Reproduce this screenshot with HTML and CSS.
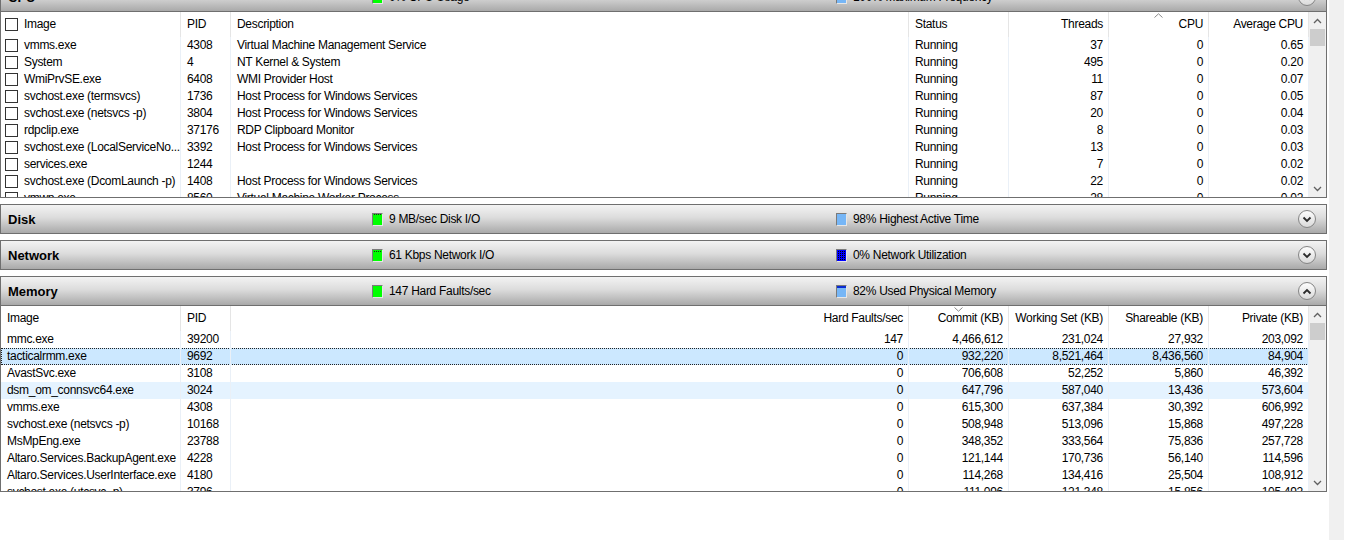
FILE: index.html
```html
<!DOCTYPE html>
<html lang="en">
<head>
    <meta charset="UTF-8">
    <title>Resource Monitor - Overview</title>
    <link rel="stylesheet" href="styles.css">
</head>
<body>
<div class="window">
    <div class="overview">

        <!-- CPU -->
        <section class="panel panel-first">
            <div class="panel-head">
                <span class="panel-title">CPU</span>
                <span class="stat stat-a"><i class="meter meter-green"></i>0% CPU Usage</span>
                <span class="stat stat-b"><i class="meter meter-light"></i>100% Maximum Frequency</span>
                <span class="toggle-btn"><svg width="10" height="7" viewBox="0 0 10 7"><path d="M1.5 5.5 L5 2 L8.5 5.5" /></svg></span>
            </div>
            <div class="grid-wrap">
                <div class="grid">
                    <div class="row row-head">
                        <div class="cell"><span class="chk"></span>Image</div>
                        <div class="cell">PID</div>
                        <div class="cell">Description</div>
                        <div class="cell">Status</div>
                        <div class="cell num">Threads</div>
                        <div class="cell num sorted">CPU<svg class="sort-mark" width="9" height="5" viewBox="0 0 9 5"><path d="M0.5 4.5 L4.5 0.8 L8.5 4.5" /></svg></div>
                        <div class="cell num">Average CPU</div>
                    </div>
                    <div class="row">
                        <div class="cell"><span class="chk"></span>vmms.exe</div>
                        <div class="cell">4308</div>
                        <div class="cell">Virtual Machine Management Service</div>
                        <div class="cell">Running</div>
                        <div class="cell num">37</div>
                        <div class="cell num">0</div>
                        <div class="cell num">0.65</div>
                    </div>
                    <div class="row">
                        <div class="cell"><span class="chk"></span>System</div>
                        <div class="cell">4</div>
                        <div class="cell">NT Kernel &amp; System</div>
                        <div class="cell">Running</div>
                        <div class="cell num">495</div>
                        <div class="cell num">0</div>
                        <div class="cell num">0.20</div>
                    </div>
                    <div class="row">
                        <div class="cell"><span class="chk"></span>WmiPrvSE.exe</div>
                        <div class="cell">6408</div>
                        <div class="cell">WMI Provider Host</div>
                        <div class="cell">Running</div>
                        <div class="cell num">11</div>
                        <div class="cell num">0</div>
                        <div class="cell num">0.07</div>
                    </div>
                    <div class="row">
                        <div class="cell"><span class="chk"></span>svchost.exe (termsvcs)</div>
                        <div class="cell">1736</div>
                        <div class="cell">Host Process for Windows Services</div>
                        <div class="cell">Running</div>
                        <div class="cell num">87</div>
                        <div class="cell num">0</div>
                        <div class="cell num">0.05</div>
                    </div>
                    <div class="row">
                        <div class="cell"><span class="chk"></span>svchost.exe (netsvcs -p)</div>
                        <div class="cell">3804</div>
                        <div class="cell">Host Process for Windows Services</div>
                        <div class="cell">Running</div>
                        <div class="cell num">20</div>
                        <div class="cell num">0</div>
                        <div class="cell num">0.04</div>
                    </div>
                    <div class="row">
                        <div class="cell"><span class="chk"></span>rdpclip.exe</div>
                        <div class="cell">37176</div>
                        <div class="cell">RDP Clipboard Monitor</div>
                        <div class="cell">Running</div>
                        <div class="cell num">8</div>
                        <div class="cell num">0</div>
                        <div class="cell num">0.03</div>
                    </div>
                    <div class="row">
                        <div class="cell"><span class="chk"></span>svchost.exe (LocalServiceNo...</div>
                        <div class="cell">3392</div>
                        <div class="cell">Host Process for Windows Services</div>
                        <div class="cell">Running</div>
                        <div class="cell num">13</div>
                        <div class="cell num">0</div>
                        <div class="cell num">0.03</div>
                    </div>
                    <div class="row">
                        <div class="cell"><span class="chk"></span>services.exe</div>
                        <div class="cell">1244</div>
                        <div class="cell"></div>
                        <div class="cell">Running</div>
                        <div class="cell num">7</div>
                        <div class="cell num">0</div>
                        <div class="cell num">0.02</div>
                    </div>
                    <div class="row">
                        <div class="cell"><span class="chk"></span>svchost.exe (DcomLaunch -p)</div>
                        <div class="cell">1408</div>
                        <div class="cell">Host Process for Windows Services</div>
                        <div class="cell">Running</div>
                        <div class="cell num">22</div>
                        <div class="cell num">0</div>
                        <div class="cell num">0.02</div>
                    </div>
                    <div class="row">
                        <div class="cell"><span class="chk"></span>vmwp.exe</div>
                        <div class="cell">8560</div>
                        <div class="cell">Virtual Machine Worker Process</div>
                        <div class="cell">Running</div>
                        <div class="cell num">28</div>
                        <div class="cell num">0</div>
                        <div class="cell num">0.02</div>
                    </div>
                </div>
                <div class="vscroll">
                    <span class="sb-arrow"><svg width="9" height="6" viewBox="0 0 9 6"><path d="M1 5 L4.5 1.5 L8 5" /></svg></span>
                    <span class="sb-thumb"></span>
                    <span class="sb-track"></span>
                    <span class="sb-arrow"><svg width="9" height="6" viewBox="0 0 9 6"><path d="M1 1 L4.5 4.5 L8 1" /></svg></span>
                </div>
            </div>
        </section>

        <!-- Disk -->
        <section class="panel">
            <div class="panel-head closed">
                <span class="panel-title">Disk</span>
                <span class="stat stat-a"><i class="meter meter-green level-1"></i>9 MB/sec Disk I/O</span>
                <span class="stat stat-b"><i class="meter meter-light"></i>98% Highest Active Time</span>
                <span class="toggle-btn"><svg width="10" height="7" viewBox="0 0 10 7"><path d="M1.5 1.5 L5 5 L8.5 1.5" /></svg></span>
            </div>
        </section>

        <!-- Network -->
        <section class="panel">
            <div class="panel-head closed">
                <span class="panel-title">Network</span>
                <span class="stat stat-a"><i class="meter meter-green level-2"></i>61 Kbps Network I/O</span>
                <span class="stat stat-b"><i class="meter meter-blue"></i>0% Network Utilization</span>
                <span class="toggle-btn"><svg width="10" height="7" viewBox="0 0 10 7"><path d="M1.5 1.5 L5 5 L8.5 1.5" /></svg></span>
            </div>
        </section>

        <!-- Memory -->
        <section class="panel">
            <div class="panel-head">
                <span class="panel-title">Memory</span>
                <span class="stat stat-a"><i class="meter meter-green"></i>147 Hard Faults/sec</span>
                <span class="stat stat-b"><i class="meter meter-light level-mem"></i>82% Used Physical Memory</span>
                <span class="toggle-btn"><svg width="10" height="7" viewBox="0 0 10 7"><path d="M1.5 5.5 L5 2 L8.5 5.5" /></svg></span>
            </div>
            <div class="grid-wrap">
                <div class="grid plain">
                    <div class="row row-head">
                        <div class="cell">Image</div>
                        <div class="cell">PID</div>
                        <div class="cell num">Hard Faults/sec</div>
                        <div class="cell num sorted">Commit (KB)<svg class="sort-mark" width="9" height="5" viewBox="0 0 9 5"><path d="M0.5 0.5 L4.5 4.2 L8.5 0.5" /></svg></div>
                        <div class="cell num">Working Set (KB)</div>
                        <div class="cell num">Shareable (KB)</div>
                        <div class="cell num">Private (KB)</div>
                    </div>
                    <div class="row">
                        <div class="cell">mmc.exe</div>
                        <div class="cell">39200</div>
                        <div class="cell num">147</div>
                        <div class="cell num">4,466,612</div>
                        <div class="cell num">231,024</div>
                        <div class="cell num">27,932</div>
                        <div class="cell num">203,092</div>
                    </div>
                    <div class="row selected">
                        <div class="cell">tacticalrmm.exe</div>
                        <div class="cell">9692</div>
                        <div class="cell num">0</div>
                        <div class="cell num">932,220</div>
                        <div class="cell num">8,521,464</div>
                        <div class="cell num">8,436,560</div>
                        <div class="cell num">84,904</div>
                    </div>
                    <div class="row">
                        <div class="cell">AvastSvc.exe</div>
                        <div class="cell">3108</div>
                        <div class="cell num">0</div>
                        <div class="cell num">706,608</div>
                        <div class="cell num">52,252</div>
                        <div class="cell num">5,860</div>
                        <div class="cell num">46,392</div>
                    </div>
                    <div class="row hover">
                        <div class="cell">dsm_om_connsvc64.exe</div>
                        <div class="cell">3024</div>
                        <div class="cell num">0</div>
                        <div class="cell num">647,796</div>
                        <div class="cell num">587,040</div>
                        <div class="cell num">13,436</div>
                        <div class="cell num">573,604</div>
                    </div>
                    <div class="row">
                        <div class="cell">vmms.exe</div>
                        <div class="cell">4308</div>
                        <div class="cell num">0</div>
                        <div class="cell num">615,300</div>
                        <div class="cell num">637,384</div>
                        <div class="cell num">30,392</div>
                        <div class="cell num">606,992</div>
                    </div>
                    <div class="row">
                        <div class="cell">svchost.exe (netsvcs -p)</div>
                        <div class="cell">10168</div>
                        <div class="cell num">0</div>
                        <div class="cell num">508,948</div>
                        <div class="cell num">513,096</div>
                        <div class="cell num">15,868</div>
                        <div class="cell num">497,228</div>
                    </div>
                    <div class="row">
                        <div class="cell">MsMpEng.exe</div>
                        <div class="cell">23788</div>
                        <div class="cell num">0</div>
                        <div class="cell num">348,352</div>
                        <div class="cell num">333,564</div>
                        <div class="cell num">75,836</div>
                        <div class="cell num">257,728</div>
                    </div>
                    <div class="row">
                        <div class="cell">Altaro.Services.BackupAgent.exe</div>
                        <div class="cell">4228</div>
                        <div class="cell num">0</div>
                        <div class="cell num">121,144</div>
                        <div class="cell num">170,736</div>
                        <div class="cell num">56,140</div>
                        <div class="cell num">114,596</div>
                    </div>
                    <div class="row">
                        <div class="cell">Altaro.Services.UserInterface.exe</div>
                        <div class="cell">4180</div>
                        <div class="cell num">0</div>
                        <div class="cell num">114,268</div>
                        <div class="cell num">134,416</div>
                        <div class="cell num">25,504</div>
                        <div class="cell num">108,912</div>
                    </div>
                    <div class="row">
                        <div class="cell">svchost.exe (utcsvc -p)</div>
                        <div class="cell">3796</div>
                        <div class="cell num">0</div>
                        <div class="cell num">111,096</div>
                        <div class="cell num">121,348</div>
                        <div class="cell num">15,856</div>
                        <div class="cell num">105,492</div>
                    </div>
                </div>
                <div class="vscroll">
                    <span class="sb-arrow"><svg width="9" height="6" viewBox="0 0 9 6"><path d="M1 5 L4.5 1.5 L8 5" /></svg></span>
                    <span class="sb-thumb"></span>
                    <span class="sb-track"></span>
                    <span class="sb-arrow"><svg width="9" height="6" viewBox="0 0 9 6"><path d="M1 1 L4.5 4.5 L8 1" /></svg></span>
                </div>
            </div>
        </section>
    </div>

    <div class="side-bar"></div>
</div>
</body>
</html>
```

FILE: styles.css
```css
body {
    margin: 0;
    background: #fff;
    font-family: "Liberation Sans", Arial, sans-serif;
    font-size: 12px;
    color: #000;
    overflow: hidden;
}

.window {
    display: flex;
    align-items: flex-start;
    height: 100vh;
}

.overview {
    width: 1327px;
    flex: none;
}

.side-bar {
    flex: none;
    width: 15px;
    height: 100vh;
    margin-left: 2px;
    background: #f0f0f0;
}

/* section panels */

.panel {
    border: 1px solid #6f6f6f;
    margin-bottom: 6px;
}

.panel-first {
    margin-top: -18px;
}

.panel-head {
    display: flex;
    align-items: center;
    height: 28px;
    padding-left: 7px;
    background: linear-gradient(#f3f3f3, #dcdcdc 45%, #a9a9a9);
    border-bottom: 1px solid #6f6f6f;
}

.panel-head.closed {
    border-bottom: none;
}

.panel-title {
    flex: 0 0 364px;
    font-size: 13px;
    font-weight: bold;
}

.stat {
    display: flex;
    align-items: center;
    gap: 6px;
    letter-spacing: -0.3px;
}

.stat-a {
    flex: 0 0 464px;
}

.stat-b {
    flex: 1;
}

.meter {
    position: relative;
    width: 9px;
    height: 11px;
    border: 1px solid;
    border-color: #7a7a7a #e6e6e6 #e6e6e6 #7a7a7a;
}

.meter-green {
    background: #00ff00;
}

.meter-light {
    background: #76b6f6;
}

/* dotted fill: one dark pixel in every 2x2 tile */
.meter-blue {
    background:
        linear-gradient(#0000ff 1px, transparent 1px) 0 0 / 2px 2px,
        linear-gradient(90deg, #0000ff 1px, #000 1px) 0 0 / 2px 2px;
}

.level-1::before,
.level-2::before,
.level-mem::before {
    content: "";
    position: absolute;
    left: 0;
    right: 0;
    top: 0;
}

.level-1::before {
    height: 1px;
    background: linear-gradient(90deg, #00ff00 1px, #222 1px) 0 0 / 2px 1px;
}

.level-2::before {
    height: 3px;
    background:
        linear-gradient(#00ff00 1px, transparent 1px) 0 0 / 2px 2px,
        linear-gradient(90deg, #00ff00 1px, #222 1px) 0 0 / 2px 2px;
}

.level-mem::before {
    height: 2px;
    background: #0a2bd0;
}

.toggle-btn {
    display: flex;
    align-items: center;
    justify-content: center;
    width: 16px;
    height: 16px;
    margin-right: 10px;
    border: 1px solid #858585;
    border-radius: 50%;
    background: linear-gradient(#fdfdfd, #dadada);
}

.toggle-btn path {
    fill: none;
    stroke: #2b2b2b;
    stroke-width: 1.8;
}

/* list views */

.grid-wrap {
    display: flex;
    height: 185px;
    overflow: hidden;
}

.grid {
    width: 1308px;
    flex: none;
    letter-spacing: -0.3px;
}

.row {
    display: grid;
    grid-template-columns: 180px 50px 678px 100px 100px 100px 100px;
    height: 17px;
    line-height: 17px;
}

.row-head {
    height: 25px;
    line-height: 23px;
}

.cell {
    position: relative;
    display: flex;
    align-items: center;
    padding: 0 5px 0 6px;
    border-right: 1px solid #eaf0f7;
    white-space: nowrap;
    overflow: hidden;
}

.row-head .cell {
    border-right-color: #e5e5e5;
    overflow: visible;
}

.cell.num {
    justify-content: flex-end;
}

.grid:not(.plain) .cell:first-child {
    padding-left: 4px;
}

.chk {
    flex: none;
    width: 11px;
    height: 11px;
    margin-right: 6px;
    border: 1px solid #333;
    background: #fff;
}

.sort-mark {
    position: absolute;
    top: 1px;
    left: 45px;
}

.sort-mark path {
    fill: none;
    stroke: #8a8a8a;
    stroke-width: 1;
}

.row.selected {
    background: #cce8ff;
    outline: 1px dotted #222;
    outline-offset: -1px;
}

.row.hover {
    background: #e5f3ff;
}

.vscroll {
    display: flex;
    flex-direction: column;
    width: 17px;
    background: #f0f0f0;
}

.sb-arrow {
    display: flex;
    align-items: center;
    justify-content: center;
    height: 17px;
}

.sb-arrow path {
    fill: none;
    stroke: #606060;
    stroke-width: 1.3;
}

.sb-thumb {
    height: 17px;
    margin: 0 1px;
    background: #cdcdcd;
}

.sb-track {
    flex: 1;
}
```
